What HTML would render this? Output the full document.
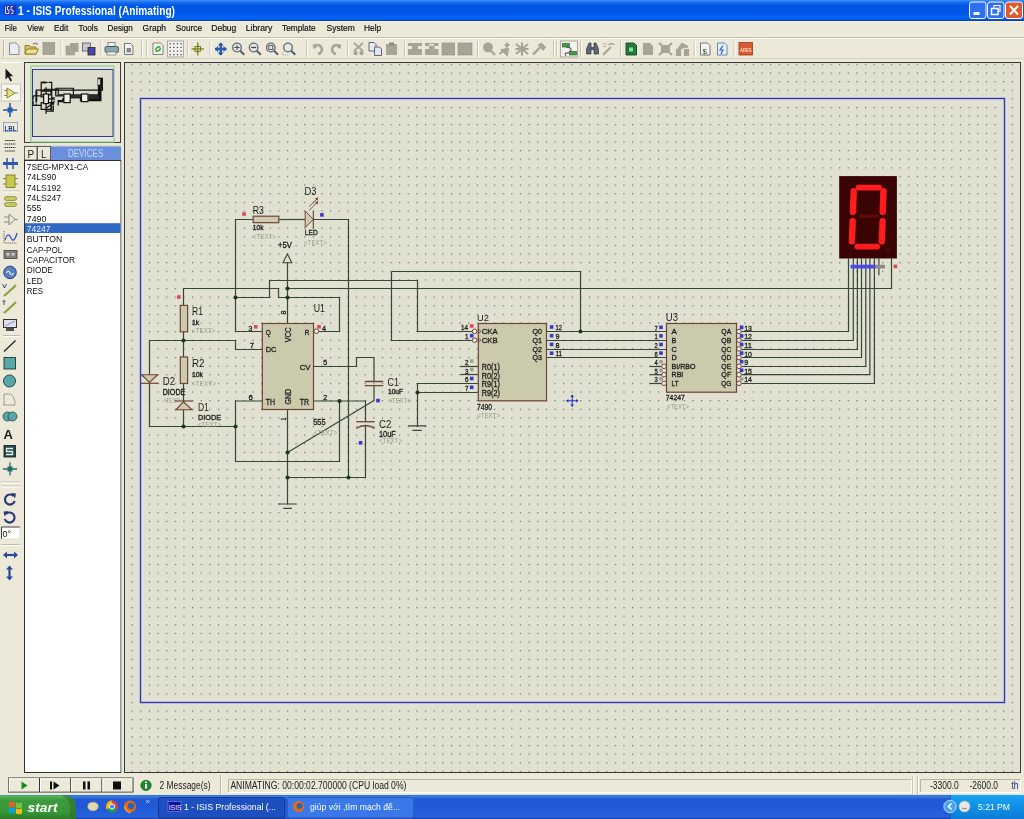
<!DOCTYPE html>
<html><head><meta charset="utf-8">
<style>
html,body{margin:0;padding:0;width:1024px;height:819px;overflow:hidden;background:#ece9d8;}
svg{position:absolute;left:0;top:0;display:block;will-change:transform;}
text{font-family:"Liberation Sans",sans-serif;}
</style></head>
<body>
<svg width="1024" height="819" viewBox="0 0 1024 819">
<defs>
<linearGradient id="tb" x1="0" y1="0" x2="0" y2="1">
<stop offset="0" stop-color="#3d95ff"/><stop offset="0.1" stop-color="#1f6ff2"/><stop offset="0.25" stop-color="#0058e6"/><stop offset="0.6" stop-color="#0055e5"/><stop offset="0.8" stop-color="#0064f6"/><stop offset="0.93" stop-color="#005ae8"/><stop offset="1" stop-color="#0040b0"/>
</linearGradient>
<linearGradient id="task" x1="0" y1="0" x2="0" y2="1">
<stop offset="0" stop-color="#3a80f3"/><stop offset="0.08" stop-color="#3d8adc"/><stop offset="0.2" stop-color="#2458d8"/><stop offset="0.5" stop-color="#2158d6"/><stop offset="0.9" stop-color="#2662dc"/><stop offset="1" stop-color="#1f4fc4"/>
</linearGradient>
<linearGradient id="start" x1="0" y1="0" x2="0" y2="1">
<stop offset="0" stop-color="#5bb85b"/><stop offset="0.2" stop-color="#3c9a3c"/><stop offset="0.7" stop-color="#379837"/><stop offset="1" stop-color="#2a7a2a"/>
</linearGradient>
<linearGradient id="tray" x1="0" y1="0" x2="0" y2="1">
<stop offset="0" stop-color="#1ba3f0"/><stop offset="0.5" stop-color="#0f8fe8"/><stop offset="1" stop-color="#0d7dd6"/>
</linearGradient>
<pattern id="grid" x="131.6" y="63.8" width="8.628" height="8.622" patternUnits="userSpaceOnUse">
<rect x="0" y="0" width="1.2" height="1.2" fill="#6a6a5e"/>
</pattern>
</defs>
<rect x="0" y="0" width="1024" height="21" fill="url(#tb)"/>
<rect x="0" y="20" width="1024" height="1" fill="#0a3fa8"/>
<rect x="0" y="21" width="1024" height="1" fill="#f7f5ee"/>
<rect x="4" y="5" width="12" height="10" fill="#2030b8"/>
<path d="M5.5 6.5 v7 h3 M9 6.5 h-1.5 v3.5 h1.5 v3.5 h-1.5 M13 6.5 h-2 v3.5 h2 v3.5 h-2" stroke="#dde" stroke-width="1" fill="none"/>
<text x="18" y="14.6" font-size="11.9" fill="#fff" font-weight="bold" textLength="157" lengthAdjust="spacingAndGlyphs">1 - ISIS Professional (Animating)</text>
<rect x="969.5" y="2" width="16.5" height="16.5" rx="2.5" fill="#2f6ff0" stroke="#fff" stroke-width="1"/><rect x="973.5" y="12" width="6" height="3" fill="#fff"/>
<rect x="987.5" y="2" width="16.5" height="16.5" rx="2.5" fill="#2f6ff0" stroke="#fff" stroke-width="1"/><rect x="991.5" y="8.5" width="6.5" height="6" fill="none" stroke="#fff" stroke-width="1.5"/><path d="M994.0 8 v-2.5 h6 v6 h-2" fill="none" stroke="#fff" stroke-width="1.2"/>
<rect x="1005.5" y="2" width="17" height="16.5" rx="2.5" fill="#e0582e" stroke="#fff" stroke-width="1"/><path d="M1010.0 6 L1018.0 14.5 M1018.0 6 L1010.0 14.5" stroke="#fff" stroke-width="2"/>
<rect x="0" y="22" width="1024" height="15" fill="#ece9d8"/>
<rect x="0" y="37" width="1024" height="1" fill="#c4c0ae"/>
<rect x="0" y="38" width="1024" height="1" fill="#fbfaf5"/>
<text x="4.8" y="31.3" font-size="9" fill="#101010" textLength="12.0" lengthAdjust="spacingAndGlyphs" stroke="#101010" stroke-width="0.18">File</text>
<text x="27.3" y="31.3" font-size="9" fill="#101010" textLength="16.5" lengthAdjust="spacingAndGlyphs" stroke="#101010" stroke-width="0.18">View</text>
<text x="54" y="31.3" font-size="9" fill="#101010" textLength="14.2" lengthAdjust="spacingAndGlyphs" stroke="#101010" stroke-width="0.18">Edit</text>
<text x="78.5" y="31.3" font-size="9" fill="#101010" textLength="19.3" lengthAdjust="spacingAndGlyphs" stroke="#101010" stroke-width="0.18">Tools</text>
<text x="107.6" y="31.3" font-size="9" fill="#101010" textLength="25.2" lengthAdjust="spacingAndGlyphs" stroke="#101010" stroke-width="0.18">Design</text>
<text x="142.6" y="31.3" font-size="9" fill="#101010" textLength="23.4" lengthAdjust="spacingAndGlyphs" stroke="#101010" stroke-width="0.18">Graph</text>
<text x="175.8" y="31.3" font-size="9" fill="#101010" textLength="26.2" lengthAdjust="spacingAndGlyphs" stroke="#101010" stroke-width="0.18">Source</text>
<text x="211.3" y="31.3" font-size="9" fill="#101010" textLength="25.0" lengthAdjust="spacingAndGlyphs" stroke="#101010" stroke-width="0.18">Debug</text>
<text x="245.7" y="31.3" font-size="9" fill="#101010" textLength="26.6" lengthAdjust="spacingAndGlyphs" stroke="#101010" stroke-width="0.18">Library</text>
<text x="282" y="31.3" font-size="9" fill="#101010" textLength="33.6" lengthAdjust="spacingAndGlyphs" stroke="#101010" stroke-width="0.18">Template</text>
<text x="326.6" y="31.3" font-size="9" fill="#101010" textLength="28.1" lengthAdjust="spacingAndGlyphs" stroke="#101010" stroke-width="0.18">System</text>
<text x="364" y="31.3" font-size="9" fill="#101010" textLength="17.2" lengthAdjust="spacingAndGlyphs" stroke="#101010" stroke-width="0.18">Help</text>
<rect x="0" y="39" width="1024" height="20" fill="#ece9d8"/>
<rect x="0" y="58" width="1024" height="1" fill="#d8d4c4"/>
<rect x="3" y="40.5" width="1" height="17" fill="#b8b4a0"/><rect x="4" y="40.5" width="1" height="17" fill="#fff"/>
<path d="M9.5 43 h6.5 l3 3 v8.5 h-9.5 z" fill="#ecebf6" stroke="#777" stroke-width="0.8"/>
<path d="M25 45.5 h4 l1 1.5 h6 v7 h-11 z" fill="#d8c660" stroke="#7a6a20" stroke-width="0.8"/><path d="M27 49 h11.5 l-2.5 5 h-11 z" fill="#f0e08a" stroke="#7a6a20" stroke-width="0.8"/><path d="M33 44 q2.5 -2 5 0.5" stroke="#556" stroke-width="0.9" fill="none"/>
<rect x="43" y="42.5" width="11.700000000000003" height="12.0" fill="#a7a596" stroke="#8e8c7e" stroke-width="0.6"/>
<rect x="60.5" y="41" width="1" height="16" fill="#c8c4b0"/><rect x="61.5" y="41" width="1" height="16" fill="#fff"/>
<rect x="70" y="43" width="8.5" height="9" fill="#a7a596"/><rect x="66" y="46" width="8.5" height="9" fill="#a7a596" stroke="#8e8c7e" stroke-width="0.5"/>
<rect x="82.5" y="43" width="8" height="8" fill="#c8c8d0" stroke="#555" stroke-width="0.8"/><rect x="88" y="47.5" width="7" height="7.5" fill="#4848b0" stroke="#223" stroke-width="0.8"/>
<rect x="100.5" y="41" width="1" height="16" fill="#c8c4b0"/><rect x="101.5" y="41" width="1" height="16" fill="#fff"/>
<rect x="108" y="42.5" width="7" height="4" fill="#eee" stroke="#666" stroke-width="0.7"/><rect x="105" y="46.5" width="13.5" height="6" rx="1.5" fill="#8aa8a8" stroke="#445" stroke-width="0.8"/><rect x="107" y="52" width="9" height="3" fill="#eee" stroke="#666" stroke-width="0.6"/>
<path d="M124.5 43.5 h6 l2.5 2.5 v8.5 h-8.5 z" fill="#f4f4f4" stroke="#555" stroke-width="0.8"/><rect x="126.5" y="48" width="4.5" height="4.5" fill="#888"/>
<rect x="141" y="41" width="1" height="16" fill="#c8c4b0"/><rect x="142" y="41" width="1" height="16" fill="#fff"/>
<rect x="146" y="41" width="1" height="16" fill="#c8c4b0"/><rect x="147" y="41" width="1" height="16" fill="#fff"/>
<path d="M153 43 h7.5 l2.5 2.5 v9 h-10 z" fill="#f6f6f0" stroke="#666" stroke-width="0.8"/><path d="M155.5 50 q1 -4 5 -3 M160.5 48 q-1 4 -5 3" stroke="#30a030" stroke-width="1.4" fill="none"/>
<rect x="167.5" y="41" width="16" height="16" fill="#f4f3ec" stroke="#9c9a8c" stroke-width="0.8"/>
<rect x="169.6" y="43.2" width="1.3" height="1.3" fill="#404060"/>
<rect x="169.6" y="46.800000000000004" width="1.3" height="1.3" fill="#404060"/>
<rect x="169.6" y="50.400000000000006" width="1.3" height="1.3" fill="#404060"/>
<rect x="169.6" y="54.0" width="1.3" height="1.3" fill="#404060"/>
<rect x="173.2" y="43.2" width="1.3" height="1.3" fill="#404060"/>
<rect x="173.2" y="46.800000000000004" width="1.3" height="1.3" fill="#404060"/>
<rect x="173.2" y="50.400000000000006" width="1.3" height="1.3" fill="#404060"/>
<rect x="173.2" y="54.0" width="1.3" height="1.3" fill="#404060"/>
<rect x="176.79999999999998" y="43.2" width="1.3" height="1.3" fill="#404060"/>
<rect x="176.79999999999998" y="46.800000000000004" width="1.3" height="1.3" fill="#404060"/>
<rect x="176.79999999999998" y="50.400000000000006" width="1.3" height="1.3" fill="#404060"/>
<rect x="176.79999999999998" y="54.0" width="1.3" height="1.3" fill="#404060"/>
<rect x="180.4" y="43.2" width="1.3" height="1.3" fill="#404060"/>
<rect x="180.4" y="46.800000000000004" width="1.3" height="1.3" fill="#404060"/>
<rect x="180.4" y="50.400000000000006" width="1.3" height="1.3" fill="#404060"/>
<rect x="180.4" y="54.0" width="1.3" height="1.3" fill="#404060"/>
<rect x="187" y="41" width="1" height="16" fill="#c8c4b0"/><rect x="188" y="41" width="1" height="16" fill="#fff"/>
<path d="M191.5 49 h12.5 M197.75 42.5 v13" stroke="#8c8c20" stroke-width="1.5"/><rect x="195" y="46.5" width="5.5" height="5" fill="none" stroke="#606010" stroke-width="0.8"/>
<rect x="209.5" y="41" width="1" height="16" fill="#c8c4b0"/><rect x="210.5" y="41" width="1" height="16" fill="#fff"/>
<path d="M215 49 h11.5 M220.75 43 v12" stroke="#2a5ab0" stroke-width="2.4"/><path d="M215 49 l3 -3 v6z M226.5 49 l-3 -3 v6z M220.75 42.5 l-3 3 h6z M220.75 55.5 l-3 -3 h6z" fill="#2a5ab0"/>
<circle cx="237" cy="47.5" r="4.3" fill="#e6e6e0" stroke="#5a6a70" stroke-width="1.3"/><path d="M240.2 50.7 l4 4" stroke="#506070" stroke-width="2"/>
<path d="M234.5 47.5 h5 M237 45 v5" stroke="#445" stroke-width="1"/>
<circle cx="253.6" cy="47.5" r="4.3" fill="#e6e6e0" stroke="#5a6a70" stroke-width="1.3"/><path d="M256.8 50.7 l4 4" stroke="#506070" stroke-width="2"/>
<path d="M251.1 47.5 h5" stroke="#445" stroke-width="1.2"/>
<circle cx="270.8" cy="47.5" r="4.3" fill="#e6e6e0" stroke="#5a6a70" stroke-width="1.3"/><path d="M274.0 50.7 l4 4" stroke="#506070" stroke-width="2"/>
<rect x="268.8" y="45.5" width="4" height="4" fill="none" stroke="#445" stroke-width="0.9"/>
<circle cx="288" cy="47.5" r="4.3" fill="#e6e6e0" stroke="#5a6a70" stroke-width="1.3"/><path d="M291.2 50.7 l4 4" stroke="#506070" stroke-width="2"/>
<path d="M283 55 h5 M283 55 v-3" stroke="#889" stroke-width="0.6" stroke-dasharray="1 1"/>
<rect x="306" y="41" width="1" height="16" fill="#c8c4b0"/><rect x="307" y="41" width="1" height="16" fill="#fff"/>
<path d="M314 46 q6 -3 8 3 q0 4 -4 5" stroke="#a7a596" stroke-width="2.6" fill="none"/><path d="M312.5 44 l1 5 l4 -2z" fill="#a7a596"/>
<path d="M340 46 q-6 -3 -8 3 q0 4 4 5" stroke="#a7a596" stroke-width="2.6" fill="none"/><path d="M341.5 44 l-1 5 l-4 -2z" fill="#a7a596"/>
<rect x="347" y="41" width="1" height="16" fill="#c8c4b0"/><rect x="348" y="41" width="1" height="16" fill="#fff"/>
<path d="M354 43 l9 8 M363 43 l-9 8" stroke="#a7a596" stroke-width="1.8"/><circle cx="355.5" cy="53" r="2.2" fill="#a7a596"/><circle cx="361.5" cy="53" r="2.2" fill="#a7a596"/>
<path d="M369 42.5 h5 l2 2 v6.5 h-7 z" fill="#e8e8f0" stroke="#445" stroke-width="0.8"/><path d="M374.5 47 h5 l2 2 v6.5 h-7 z" fill="#e0e4f4" stroke="#445" stroke-width="0.8"/>
<rect x="386" y="44" width="11" height="11" fill="#a7a596"/><rect x="389" y="42.5" width="5" height="3" fill="#8e8c7e"/>
<rect x="404" y="41" width="1" height="16" fill="#c8c4b0"/><rect x="405" y="41" width="1" height="16" fill="#fff"/>
<path d="M408 43 h14 v3 h-4 v3 h4 v6 h-14 v-6 h4 v-3 h-4z" fill="#a7a596"/>
<path d="M425 43 h13.5 v3 h-4 v3 h4 v6 h-13.5 v-6 h4 v-3 h-4z" fill="#a7a596"/><rect x="429" y="44" width="5" height="1.5" fill="#ece9d8"/>
<rect x="442" y="43" width="12.699999999999989" height="12" fill="#a7a596" stroke="#8e8c7e" stroke-width="0.6"/>
<rect x="458" y="43" width="14" height="12" fill="#a7a596" stroke="#8e8c7e" stroke-width="0.6"/>
<rect x="477" y="41" width="1" height="16" fill="#c8c4b0"/><rect x="478" y="41" width="1" height="16" fill="#fff"/>
<circle cx="488" cy="47.5" r="5" fill="#a7a596"/><path d="M491 51 l4 4" stroke="#a7a596" stroke-width="2.4"/>
<path d="M499.5 54 l7 -6 M502 50 l6 -1 l-1 6 z M507 42.5 v5 M504.5 45 h5" stroke="#a7a596" stroke-width="2" fill="#a7a596"/>
<path d="M516 44 l12 10 M528 44 l-12 10 M522 42.5 v13 M515.5 49 h13" stroke="#a7a596" stroke-width="2.2"/>
<path d="M533 54.5 l8 -8" stroke="#a7a596" stroke-width="2.4"/><path d="M537.5 45 l4 -2.5 l4.5 4.5 l-2.5 4z" fill="#a7a596"/>
<rect x="553" y="41" width="1" height="16" fill="#c8c4b0"/><rect x="554" y="41" width="1" height="16" fill="#fff"/>
<rect x="556" y="41" width="1" height="16" fill="#c8c4b0"/><rect x="557" y="41" width="1" height="16" fill="#fff"/>
<rect x="560.5" y="41" width="17" height="16" fill="#f4f3ec" stroke="#9c9a8c" stroke-width="0.8"/><path d="M566 47 q5 0 5 3 q0 3 -4 3 q-3 0 -1 3" stroke="#806080" stroke-width="1.3" fill="none"/><rect x="562.5" y="43.5" width="7" height="3.5" fill="#40a040" stroke="#205020" stroke-width="0.6"/><rect x="569.5" y="51.5" width="7" height="3.5" fill="#40a040" stroke="#205020" stroke-width="0.6"/>
<rect x="580" y="41" width="1" height="16" fill="#c8c4b0"/><rect x="581" y="41" width="1" height="16" fill="#fff"/>
<path d="M586.5 54 v-5 l2.5 -6 h2 v11z M598.5 54 v-5 l-2.5 -6 h-2 v11z" fill="#606878" stroke="#303440" stroke-width="0.7"/><rect x="591" y="47" width="3.5" height="3" fill="#505868"/>
<path d="M603 55 l8 -8" stroke="#a7a596" stroke-width="2.2"/><path d="M608.5 45 q3 -3 6 0" stroke="#a7a596" stroke-width="1.5" fill="none"/><path d="M603 44 h4 M603 46.5 h3" stroke="#a7a596" stroke-width="0.8"/>
<rect x="620" y="41" width="1" height="16" fill="#c8c4b0"/><rect x="621" y="41" width="1" height="16" fill="#fff"/>
<path d="M626 43 h8 l2.5 2.5 v9.5 h-10.5z" fill="#208040" stroke="#0a3018" stroke-width="0.8"/><rect x="628.5" y="47" width="5" height="5" fill="#80e090" stroke="#104020" stroke-width="0.6"/>
<path d="M643 43 h7 l3 3 v9 h-10z" fill="#a7a596"/>
<path d="M659 43 l13 12 M672 43 l-13 12" stroke="#a7a596" stroke-width="2.2"/><rect x="661" y="45" width="9" height="8" fill="#a7a596"/>
<path d="M677 55 v-5 h3 v5z M685 55 v-5 h3 v5z M678 50 l4 -6 l6 3" stroke="#a7a596" stroke-width="2.2" fill="#a7a596"/>
<rect x="693.75" y="41" width="1" height="16" fill="#c8c4b0"/><rect x="694.75" y="41" width="1" height="16" fill="#fff"/>
<path d="M700.5 43 h7 l2.5 2.5 v9.5 h-9.5z" fill="#f4f4f0" stroke="#555" stroke-width="0.8"/><text x="702.5" y="53.5" font-size="8" fill="#305030" font-family="Liberation Sans">$</text>
<path d="M717.5 43 h7 l2.5 2.5 v9.5 h-9.5z" fill="#e8f0fa" stroke="#4a6a9a" stroke-width="0.8"/><path d="M723 45.5 l-3 4.5 h3 l-2 4" stroke="#2060d0" stroke-width="1.2" fill="none"/>
<rect x="733.6" y="41" width="1" height="16" fill="#c8c4b0"/><rect x="734.6" y="41" width="1" height="16" fill="#fff"/>
<rect x="739" y="42.5" width="13.5" height="12.5" fill="#d85a30" stroke="#8a2a10" stroke-width="0.7"/><text x="740" y="51.5" font-size="6" fill="#ffd8c0" font-weight="bold" font-family="Liberation Sans" textLength="11.5" lengthAdjust="spacingAndGlyphs">ARES</text>
<rect x="0" y="59" width="24" height="716" fill="#ece9d8"/>
<rect x="2" y="62" width="19" height="1" fill="#fff"/>
<path d="M5.5 68.5 v11 l2.5 -2.5 l2.5 4.5 l1.6 -0.9 l-2.4 -4.3 h3.5z" fill="#1a1a1a"/>
<rect x="1.5" y="84" width="19" height="17" fill="#f6f5ee" stroke="#b0ae9e" stroke-width="0.6"/>
<path d="M7 88 v10 l8 -5z" fill="#e0e080" stroke="#707020" stroke-width="0.8"/><path d="M4 90.5 h3 M4 95.5 h3 M15 93 h3" stroke="#707020" stroke-width="0.8"/>
<path d="M3 110 h14 M10 103 v14" stroke="#2a5aa8" stroke-width="1.6"/><rect x="7.5" y="107.5" width="5" height="5" fill="#2a5aa8"/>
<rect x="3.5" y="122.5" width="14" height="9" fill="none" stroke="#2a5aa8" stroke-width="0.8" stroke-dasharray="1.2 0.8"/>
<text x="4.5" y="130.5" font-size="7" font-weight="bold" fill="#1a3a88" font-family="Liberation Sans" textLength="12" lengthAdjust="spacingAndGlyphs">LBL</text>
<path d="M5 140.5 h10 M4.5 144 h11 M4.5 147.5 h11 M5 151 h10" stroke="#303030" stroke-width="1.1" stroke-dasharray="1.5 0.6"/>
<path d="M3 163.5 h15" stroke="#2a5aa8" stroke-width="3"/><path d="M7 158 v11 M13 158 v11" stroke="#2a5aa8" stroke-width="1.5"/>
<rect x="6" y="175" width="9" height="12.5" fill="#c8c850" stroke="#707020" stroke-width="0.8"/><path d="M3 178.5 h3 M3 184 h3 M15 178.5 h3 M15 184 h3" stroke="#707020" stroke-width="0.8"/>
<rect x="3" y="190.5" width="17" height="1" fill="#c0bca8"/><rect x="3" y="191.5" width="17" height="1" fill="#fff"/>
<rect x="4.5" y="196.5" width="12" height="4" rx="2" fill="#c8c860" stroke="#707020" stroke-width="0.6"/><rect x="4.5" y="202.5" width="12" height="4" rx="2" fill="#c8c860" stroke="#707020" stroke-width="0.6"/>
<path d="M9 214 v11 l6 -5.5z" fill="none" stroke="#707070" stroke-width="0.8"/><path d="M4 217 h5 M4 222 h5 M15 219.5 h3" stroke="#707070" stroke-width="0.8"/>
<path d="M4 231 v12 h13" stroke="#804040" stroke-width="0.9" fill="none" stroke-dasharray="1 0.8"/><path d="M5 240 q3 -9 6 -2 q3 6 6 -5" stroke="#3050c0" stroke-width="1.2" fill="none"/>
<rect x="4" y="250.5" width="13" height="8" fill="#808080" stroke="#404040" stroke-width="0.8"/><rect x="6.5" y="253" width="3" height="2.5" fill="#d0d0d0"/><rect x="11.5" y="253" width="3" height="2.5" fill="#d0d0d0"/>
<circle cx="10" cy="272.4" r="6.3" fill="#5a80c0" stroke="#203a80" stroke-width="0.9"/><path d="M6.5 273 q1.8 -4 3.5 0 q1.8 4 3.5 0" stroke="#e8f0ff" stroke-width="1.1" fill="none"/>
<path d="M4 296 l9 -8 l3 -3" stroke="#90a040" stroke-width="2.2"/><path d="M2.5 284 l2 4 l2 -4" stroke="#303070" stroke-width="0.9" fill="none"/>
<path d="M4 313 l9 -8 l3 -3" stroke="#90a040" stroke-width="2.2"/><path d="M2.5 301 h3 M4 301 v4" stroke="#303070" stroke-width="0.9" fill="none"/>
<rect x="3.5" y="319.5" width="13" height="8" fill="#e0e0f0" stroke="#303030" stroke-width="1"/><path d="M5 326 l10 -5" stroke="#406080" stroke-width="0.6"/><rect x="6" y="327.5" width="8" height="3.5" fill="#505050"/>
<rect x="3" y="335" width="17" height="1" fill="#c0bca8"/><rect x="3" y="336" width="17" height="1" fill="#fff"/>
<path d="M4 351.5 L15.6 340.5" stroke="#202020" stroke-width="1.2"/>
<rect x="4" y="357.5" width="11.5" height="11.5" fill="#5aa6a6" stroke="#1a3a3a" stroke-width="0.9"/>
<circle cx="9.5" cy="381" r="6" fill="#5aa6a6" stroke="#1a3a3a" stroke-width="0.9"/>
<path d="M4 405 v-11 h4 q7 0 7 11z" fill="none" stroke="#404040" stroke-width="0.8" stroke-dasharray="1 0.8"/>
<circle cx="7.5" cy="416.5" r="4.5" fill="#5aa6a6" stroke="#1a3a3a" stroke-width="0.7"/><circle cx="12.5" cy="416.5" r="4.5" fill="#5aa6a6" stroke="#1a3a3a" stroke-width="0.7"/>
<text x="3.5" y="439" font-size="13" font-weight="bold" fill="#202020" font-family="Liberation Serif">A</text>
<rect x="4" y="445.5" width="11.5" height="11.5" fill="#2a4848" stroke="#101818" stroke-width="0.8"/><path d="M13 448.5 h-6.5 v3 h6 v3 h-6.5" stroke="#e0f0f0" stroke-width="1.3" fill="none"/>
<path d="M3 469 h14 M10 462.5 v13" stroke="#2a6a6a" stroke-width="1.3"/><rect x="7.5" y="466.5" width="5" height="5" fill="#2a6a6a"/>
<rect x="1" y="481.5" width="19" height="1" fill="#c0bca8"/><rect x="1" y="482.5" width="19" height="1" fill="#fff"/>
<rect x="2" y="485.5" width="18" height="1" fill="#c0bca8"/><rect x="2" y="486.5" width="18" height="1" fill="#fff"/>
<path d="M13.5 496 a5 5 0 1 0 1.2 5" stroke="#2a3a78" stroke-width="2.2" fill="none"/><path d="M11 493 l5 0.5 l-1 5z" fill="#2a3a78"/>
<path d="M6 514 a5 5 0 1 1 -1.2 5" stroke="#2a3a78" stroke-width="2.2" fill="none" transform="translate(0,0)"/><path d="M8.5 511 l-5 0.5 l1 5z" fill="#2a3a78"/>
<rect x="1.5" y="527" width="18.5" height="12" fill="#fff"/><path d="M1.5 539 v-12 h18.5" stroke="#404040" stroke-width="1" fill="none"/><path d="M20 527 v12 h-18.5" stroke="#e0ded0" stroke-width="1" fill="none"/>
<text x="2.5" y="537" font-size="9" fill="#101010" font-family="Liberation Sans">0°</text>
<rect x="1" y="544" width="19" height="1" fill="#c0bca8"/><rect x="1" y="545" width="19" height="1" fill="#fff"/>
<path d="M4.5 555 h12" stroke="#2a4a98" stroke-width="2.2"/><path d="M3 555 l4 -3.5 v7z M18 555 l-4 -3.5 v7z" fill="#2a4a98"/>
<path d="M9.5 567 v12" stroke="#2a4a98" stroke-width="2.2"/><path d="M9.5 565.5 l-3.5 4 h7z M9.5 580.5 l-3.5 -4 h7z" fill="#2a4a98"/>
<rect x="24.5" y="62.5" width="96" height="80" fill="#e8e6da" stroke="#3a3a3a" stroke-width="1"/>
<rect x="31" y="66" width="83" height="76" fill="none" stroke="#8ad08a" stroke-width="1.2"/>
<rect x="32.5" y="69.5" width="80.5" height="67" fill="#dcdccc" stroke="#3838a0" stroke-width="1"/>
<polyline points="41.17,91.13 41.17,82.46 42.83,82.46" fill="none" stroke="#101010" stroke-width="1.2"/>
<polyline points="45.22,82.46 47.67,82.46" fill="none" stroke="#101010" stroke-width="1.2"/>
<polyline points="48.47,82.46 51.73,82.46 51.73,111.14" fill="none" stroke="#101010" stroke-width="1.2"/>
<polyline points="36.32,92.01 36.32,90.13 45.19,90.13 45.19,91.13 46.03,91.13" fill="none" stroke="#101010" stroke-width="1.2"/>
<polyline points="41.17,91.13 44.35,91.13 44.35,89.24 58.18,89.24 58.18,94.91 63.36,94.91" fill="none" stroke="#101010" stroke-width="1.2"/>
<polyline points="46.03,90.13 102.45,90.13 102.45,86.79" fill="none" stroke="#101010" stroke-width="1.2"/>
<polyline points="46.03,91.13 50.89,91.13 50.89,94.91 48.93,94.91" fill="none" stroke="#101010" stroke-width="1.2"/>
<polyline points="46.03,87.26 46.03,93.99" fill="none" stroke="#101010" stroke-width="1.2"/>
<polyline points="41.17,91.13 41.17,94.91 43.64,94.91" fill="none" stroke="#101010" stroke-width="1.2"/>
<polyline points="36.32,94.94 36.32,97.75" fill="none" stroke="#101010" stroke-width="1.2"/>
<polyline points="33.14,95.91 41.17,95.91 41.17,96.91 43.64,96.91" fill="none" stroke="#101010" stroke-width="1.2"/>
<polyline points="33.14,95.91 33.14,99.71" fill="none" stroke="#101010" stroke-width="1.2"/>
<polyline points="33.14,100.69 33.14,105.47 41.17,105.47" fill="none" stroke="#101010" stroke-width="1.2"/>
<polyline points="36.32,100.69 36.32,102.73" fill="none" stroke="#101010" stroke-width="1.2"/>
<polyline points="36.32,103.62 36.32,105.47" fill="none" stroke="#101010" stroke-width="1.2"/>
<polyline points="43.64,102.64 41.17,102.64 41.17,109.37 50.89,109.37 50.89,102.64" fill="none" stroke="#101010" stroke-width="1.2"/>
<polyline points="48.44,102.64 53.32,102.64 53.32,104.94" fill="none" stroke="#101010" stroke-width="1.2"/>
<polyline points="53.32,105.48 53.32,111.14 46.03,111.14" fill="none" stroke="#101010" stroke-width="1.2"/>
<polyline points="46.03,103.58 46.03,114.09" fill="none" stroke="#101010" stroke-width="1.2"/>
<polyline points="46.03,108.36 54.11,102.58" fill="none" stroke="#101010" stroke-width="1.2"/>
<polyline points="48.44,98.80 52.48,98.80 52.48,97.80 54.11,97.80 54.11,100.47" fill="none" stroke="#101010" stroke-width="1.2"/>
<polyline points="54.11,100.93 54.11,102.58" fill="none" stroke="#101010" stroke-width="1.2"/>
<polyline points="55.75,88.24 55.75,95.91 63.36,95.91" fill="none" stroke="#101010" stroke-width="1.2"/>
<polyline points="55.75,88.24 73.40,88.24 73.40,94.91" fill="none" stroke="#101010" stroke-width="1.2"/>
<polyline points="70.21,94.91 81.43,94.91" fill="none" stroke="#101010" stroke-width="1.2"/>
<polyline points="70.21,95.91 81.43,95.91" fill="none" stroke="#101010" stroke-width="1.2"/>
<polyline points="70.21,96.91 81.43,96.91" fill="none" stroke="#101010" stroke-width="1.2"/>
<polyline points="70.21,97.80 81.43,97.80" fill="none" stroke="#101010" stroke-width="1.2"/>
<polyline points="63.81,100.69 58.18,100.69 58.18,105.47" fill="none" stroke="#101010" stroke-width="1.2"/>
<polyline points="58.18,101.69 63.81,101.69" fill="none" stroke="#101010" stroke-width="1.2"/>
<polyline points="62.17,98.80 63.81,98.80" fill="none" stroke="#101010" stroke-width="1.2"/>
<polyline points="62.17,99.69 63.81,99.69" fill="none" stroke="#101010" stroke-width="1.2"/>
<polyline points="88.44,94.91 98.44,94.91 98.44,86.79" fill="none" stroke="#101010" stroke-width="1.2"/>
<polyline points="88.44,95.91 98.89,95.91 98.89,86.79" fill="none" stroke="#101010" stroke-width="1.2"/>
<polyline points="88.44,96.91 99.27,96.91 99.27,86.79" fill="none" stroke="#101010" stroke-width="1.2"/>
<polyline points="88.44,97.80 99.65,97.80 99.65,86.79" fill="none" stroke="#101010" stroke-width="1.2"/>
<polyline points="88.44,98.80 100.05,98.80 100.05,86.79" fill="none" stroke="#101010" stroke-width="1.2"/>
<polyline points="88.44,99.71 100.44,99.71 100.44,86.79" fill="none" stroke="#101010" stroke-width="1.2"/>
<polyline points="88.44,100.69 100.86,100.69 100.86,86.79" fill="none" stroke="#101010" stroke-width="1.2"/>
<polyline points="79.87,98.80 81.02,98.80" fill="none" stroke="#101010" stroke-width="1.2"/>
<polyline points="79.87,99.71 81.02,99.71" fill="none" stroke="#101010" stroke-width="1.2"/>
<polyline points="79.87,100.69 81.02,100.69" fill="none" stroke="#101010" stroke-width="1.2"/>
<polyline points="101.28,86.79 101.28,88.66" fill="none" stroke="#101010" stroke-width="1.2"/>
<rect x="42.83" y="82.09" width="2.39" height="0.72" fill="#f0f0e8" stroke="#101010" stroke-width="1.2"/>
<rect x="36.02" y="92.01" width="0.68" height="2.94" fill="#f0f0e8" stroke="#101010" stroke-width="1.2"/>
<rect x="36.02" y="97.75" width="0.68" height="2.95" fill="#f0f0e8" stroke="#101010" stroke-width="1.2"/>
<rect x="43.68" y="94.02" width="4.78" height="9.56" fill="#f0f0e8" stroke="#101010" stroke-width="1.2"/>
<rect x="63.86" y="94.02" width="6.37" height="8.60" fill="#f0f0e8" stroke="#101010" stroke-width="1.2"/>
<rect x="81.44" y="94.02" width="6.54" height="7.64" fill="#f0f0e8" stroke="#101010" stroke-width="1.2"/>
<rect x="97.57" y="77.63" width="5.39" height="9.16" fill="#101010"/>
<rect x="97.92" y="79.17" width="2.34" height="5.56" fill="#d0d0c0"/>
<rect x="24" y="145.5" width="97.5" height="15" fill="#d4d0c0"/>
<rect x="24.5" y="146.5" width="12.5" height="13.5" fill="#ece9d8" stroke="#404040" stroke-width="0.8"/>
<rect x="37.5" y="146.5" width="13" height="13.5" fill="#ece9d8" stroke="#404040" stroke-width="0.8"/>
<text x="27.5" y="157.5" font-size="10" fill="#202020">P</text>
<text x="41" y="157.5" font-size="10" fill="#202020">L</text>
<rect x="51" y="146.5" width="70" height="13.5" fill="#6a8fdd"/>
<text x="67.9" y="157.1" font-size="10.4" fill="#c8d8f8" textLength="35.5" lengthAdjust="spacingAndGlyphs">DEVICES</text>
<rect x="24.5" y="160.5" width="96.5" height="612" fill="#fff" stroke="#303030" stroke-width="1"/>
<rect x="25" y="223.2" width="95.5" height="9.8" fill="#316ac5"/>
<text x="26.8" y="170.1" font-size="9.6" fill="#101010" textLength="61.4" lengthAdjust="spacingAndGlyphs">7SEG-MPX1-CA</text>
<text x="26.8" y="180.43" font-size="9.6" fill="#101010" textLength="29.6" lengthAdjust="spacingAndGlyphs">74LS90</text>
<text x="26.8" y="190.76" font-size="9.6" fill="#101010" textLength="34.3" lengthAdjust="spacingAndGlyphs">74LS192</text>
<text x="26.8" y="201.09" font-size="9.6" fill="#101010" textLength="34.3" lengthAdjust="spacingAndGlyphs">74LS247</text>
<text x="26.8" y="211.42" font-size="9.6" fill="#101010" textLength="14.5" lengthAdjust="spacingAndGlyphs">555</text>
<text x="26.8" y="221.75" font-size="9.6" fill="#101010" textLength="19.5" lengthAdjust="spacingAndGlyphs">7490</text>
<text x="26.8" y="232.07999999999998" font-size="9.6" fill="#e8f0ff" textLength="23.7" lengthAdjust="spacingAndGlyphs">74247</text>
<text x="26.8" y="242.41" font-size="9.6" fill="#101010" textLength="35.4" lengthAdjust="spacingAndGlyphs">BUTTON</text>
<text x="26.8" y="252.74" font-size="9.6" fill="#101010" textLength="35.4" lengthAdjust="spacingAndGlyphs">CAP-POL</text>
<text x="26.8" y="263.07" font-size="9.6" fill="#101010" textLength="48.2" lengthAdjust="spacingAndGlyphs">CAPACITOR</text>
<text x="26.8" y="273.4" font-size="9.6" fill="#101010" textLength="26" lengthAdjust="spacingAndGlyphs">DIODE</text>
<text x="26.8" y="283.73" font-size="9.6" fill="#101010" textLength="16" lengthAdjust="spacingAndGlyphs">LED</text>
<text x="26.8" y="294.06" font-size="9.6" fill="#101010" textLength="16.3" lengthAdjust="spacingAndGlyphs">RES</text>
<rect x="121.5" y="59" width="2.5" height="716" fill="#ece9d8"/>
<rect x="124.5" y="62.5" width="896" height="710" fill="#e1e1d1" stroke="#383838" stroke-width="1"/>
<rect x="125" y="63" width="895" height="709" fill="url(#grid)"/>
<rect x="140.5" y="98.5" width="864" height="604" fill="none" stroke="#c8c8ec" stroke-width="3"/>
<rect x="140.5" y="98.5" width="864" height="604" fill="none" stroke="#3a3a98" stroke-width="1.2"/>
<polyline points="235.5,297.5 235.5,219.5 253.2,219.5" fill="none" stroke="#364834" stroke-width="1.2" stroke-linejoin="miter"/>
<polyline points="278.8,219.5 305,219.5" fill="none" stroke="#364834" stroke-width="1.2" stroke-linejoin="miter"/>
<polyline points="313.6,219.5 348.5,219.5 348.5,477.5" fill="none" stroke="#364834" stroke-width="1.2" stroke-linejoin="miter"/>
<polyline points="183.5,305.4 183.5,288.5 278.5,288.5 278.5,297.5 287.5,297.5" fill="none" stroke="#364834" stroke-width="1.2" stroke-linejoin="miter"/>
<polyline points="235.5,297.5 269.5,297.5 269.5,280.5 417.5,280.5 417.5,331.5 473,331.5" fill="none" stroke="#364834" stroke-width="1.2" stroke-linejoin="miter"/>
<polyline points="287.5,288.5 891.5,288.5 891.5,258.5" fill="none" stroke="#364834" stroke-width="1.2" stroke-linejoin="miter"/>
<polyline points="287.5,297.5 339.5,297.5 339.5,331.5 318.5,331.5" fill="none" stroke="#364834" stroke-width="1.2" stroke-linejoin="miter"/>
<polyline points="287.5,262.7 287.5,323.2" fill="none" stroke="#364834" stroke-width="1.2" stroke-linejoin="miter"/>
<polyline points="235.5,297.5 235.5,331.5 261.9,331.5" fill="none" stroke="#364834" stroke-width="1.2" stroke-linejoin="miter"/>
<polyline points="183.5,331.8 183.5,357" fill="none" stroke="#364834" stroke-width="1.2" stroke-linejoin="miter"/>
<polyline points="149.5,340.5 235.5,340.5 235.5,349.5 261.9,349.5" fill="none" stroke="#364834" stroke-width="1.2" stroke-linejoin="miter"/>
<polyline points="149.5,340.5 149.5,374.7" fill="none" stroke="#364834" stroke-width="1.2" stroke-linejoin="miter"/>
<polyline points="149.5,383.5 149.5,426.5 235.5,426.5" fill="none" stroke="#364834" stroke-width="1.2" stroke-linejoin="miter"/>
<polyline points="183.5,383.5 183.5,401.8" fill="none" stroke="#364834" stroke-width="1.2" stroke-linejoin="miter"/>
<polyline points="183.5,409.8 183.5,426.5" fill="none" stroke="#364834" stroke-width="1.2" stroke-linejoin="miter"/>
<polyline points="261.9,401 235.5,401 235.5,461.5 339.5,461.5 339.5,401" fill="none" stroke="#364834" stroke-width="1.2" stroke-linejoin="miter"/>
<polyline points="313.3,401 365.5,401 365.5,421.7" fill="none" stroke="#364834" stroke-width="1.2" stroke-linejoin="miter"/>
<polyline points="365.5,426.6 365.5,477.5 287.5,477.5" fill="none" stroke="#364834" stroke-width="1.2" stroke-linejoin="miter"/>
<polyline points="287.5,409.5 287.5,504" fill="none" stroke="#364834" stroke-width="1.2" stroke-linejoin="miter"/>
<polyline points="287.5,452.5 374,400.5" fill="none" stroke="#364834" stroke-width="1.2" stroke-linejoin="miter"/>
<polyline points="313.3,366.5 356.5,366.5 356.5,357.5 374,357.5 374,381.5" fill="none" stroke="#364834" stroke-width="1.2" stroke-linejoin="miter"/>
<polyline points="374,385.6 374,400.5" fill="none" stroke="#364834" stroke-width="1.2" stroke-linejoin="miter"/>
<polyline points="391.5,271.5 391.5,340.5 473,340.5" fill="none" stroke="#364834" stroke-width="1.2" stroke-linejoin="miter"/>
<polyline points="391.5,271.5 580.5,271.5 580.5,331.5" fill="none" stroke="#364834" stroke-width="1.2" stroke-linejoin="miter"/>
<polyline points="546.3,331.5 666.4,331.5" fill="none" stroke="#364834" stroke-width="1.2" stroke-linejoin="miter"/>
<polyline points="546.3,340.5 666.4,340.5" fill="none" stroke="#364834" stroke-width="1.2" stroke-linejoin="miter"/>
<polyline points="546.3,349.5 666.4,349.5" fill="none" stroke="#364834" stroke-width="1.2" stroke-linejoin="miter"/>
<polyline points="546.3,357.5 666.4,357.5" fill="none" stroke="#364834" stroke-width="1.2" stroke-linejoin="miter"/>
<polyline points="477.8,383.5 417.5,383.5 417.5,426.5" fill="none" stroke="#364834" stroke-width="1.2" stroke-linejoin="miter"/>
<polyline points="417.5,392.5 477.8,392.5" fill="none" stroke="#364834" stroke-width="1.2" stroke-linejoin="miter"/>
<polyline points="460.3,366.5 477.8,366.5" fill="none" stroke="#364834" stroke-width="1.2" stroke-linejoin="miter"/>
<polyline points="460.3,374.5 477.8,374.5" fill="none" stroke="#364834" stroke-width="1.2" stroke-linejoin="miter"/>
<polyline points="741.5,331.5 848.5,331.5 848.5,258.5" fill="none" stroke="#364834" stroke-width="1.2" stroke-linejoin="miter"/>
<polyline points="741.5,340.5 853.3,340.5 853.3,258.5" fill="none" stroke="#364834" stroke-width="1.2" stroke-linejoin="miter"/>
<polyline points="741.5,349.5 857.4,349.5 857.4,258.5" fill="none" stroke="#364834" stroke-width="1.2" stroke-linejoin="miter"/>
<polyline points="741.5,357.5 861.5,357.5 861.5,258.5" fill="none" stroke="#364834" stroke-width="1.2" stroke-linejoin="miter"/>
<polyline points="741.5,366.5 865.8,366.5 865.8,258.5" fill="none" stroke="#364834" stroke-width="1.2" stroke-linejoin="miter"/>
<polyline points="741.5,374.7 869.9,374.7 869.9,258.5" fill="none" stroke="#364834" stroke-width="1.2" stroke-linejoin="miter"/>
<polyline points="741.5,383.5 874.4,383.5 874.4,258.5" fill="none" stroke="#364834" stroke-width="1.2" stroke-linejoin="miter"/>
<polyline points="649.7,366.5 662,366.5" fill="none" stroke="#364834" stroke-width="1.2" stroke-linejoin="miter"/>
<polyline points="649.7,374.7 662,374.7" fill="none" stroke="#364834" stroke-width="1.2" stroke-linejoin="miter"/>
<polyline points="649.7,383.5 662,383.5" fill="none" stroke="#364834" stroke-width="1.2" stroke-linejoin="miter"/>
<polyline points="878.9,258.5 878.9,275.3" fill="none" stroke="#364834" stroke-width="1.2" stroke-linejoin="miter"/>
<rect x="253.2" y="216.2" width="25.600000000000023" height="6.5" fill="#cccaac" stroke="#6e4438" stroke-width="1.2"/>
<rect x="180.3" y="305.4" width="7.299999999999983" height="26.400000000000034" fill="#cccaac" stroke="#6e4438" stroke-width="1.2"/>
<rect x="180.3" y="357" width="7.299999999999983" height="26.5" fill="#cccaac" stroke="#6e4438" stroke-width="1.2"/>
<rect x="262.3" y="323.5" width="51.19999999999999" height="86.0" fill="#cccaac" stroke="#6e4438" stroke-width="1.2"/>
<rect x="478.3" y="323.5" width="68.19999999999999" height="77.30000000000001" fill="#cccaac" stroke="#6e4438" stroke-width="1.2"/>
<rect x="666.5" y="323.5" width="70.0" height="68.69999999999999" fill="#cccaac" stroke="#6e4438" stroke-width="1.2"/>
<path d="M305.2 211 L305.2 227.6 L313.3 219.4 Z" fill="#d6c8b0" stroke="#6e4a40" stroke-width="1"/><path d="M313.3 211 V228.5" stroke="#5a4038" stroke-width="1.1"/>
<path d="M309.1 206.6 L317.6 198.3 M309.1 210.4 L317.6 202" stroke="#6e4438" stroke-width="0.9"/><path d="M318.4 197.4 l-3.4 0.8 l2.6 2.6z M318.4 201.2 l-3.4 0.8 l2.6 2.6z" fill="#6e4438"/>
<path d="M141.5 374.7 L157.6 374.7 L149.5 382.5 Z" fill="#cccaac" stroke="#6e4438" stroke-width="1.1"/><path d="M140 383.3 H158.5" stroke="#6e4438" stroke-width="1.2"/>
<path d="M175.9 409.8 L192 409.8 L183.5 401.8 Z" fill="#cccaac" stroke="#6e4438" stroke-width="1.1"/><path d="M175 401 H192.5" stroke="#6e4438" stroke-width="1.2"/>
<path d="M364.8 381.5 H383.3 M364.8 385.6 H383.3" stroke="#6e4438" stroke-width="1.3"/>
<path d="M356.2 421.7 H374.7" stroke="#6e4438" stroke-width="1.3"/><path d="M356.2 428.5 Q365.5 422.5 374.7 428.5" stroke="#6e4438" stroke-width="1.3" fill="none"/>
<path d="M283 262.7 H291.8 L287.4 254 Z" fill="none" stroke="#364834" stroke-width="1.1"/>
<path d="M278 504 H296.5 M283.3 508.4 H292" stroke="#364834" stroke-width="1.2"/>
<path d="M408.2 425.8 H426.2 M412.5 430.3 H421.7" stroke="#364834" stroke-width="1.2"/>
<circle cx="316.3" cy="331.2" r="2.3" fill="#f0eee0" stroke="#6e4438" stroke-width="1"/>
<circle cx="474.6" cy="331.3" r="2.3" fill="#f0eee0" stroke="#6e4438" stroke-width="1"/>
<circle cx="474.6" cy="340.2" r="2.3" fill="#f0eee0" stroke="#6e4438" stroke-width="1"/>
<circle cx="664" cy="366.3" r="2.3" fill="#f0eee0" stroke="#6e4438" stroke-width="1"/>
<circle cx="664" cy="374.7" r="2.3" fill="#f0eee0" stroke="#6e4438" stroke-width="1"/>
<circle cx="664" cy="383.3" r="2.3" fill="#f0eee0" stroke="#6e4438" stroke-width="1"/>
<circle cx="739" cy="331.5" r="2.3" fill="#f0eee0" stroke="#6e4438" stroke-width="1"/>
<circle cx="739" cy="340.2" r="2.3" fill="#f0eee0" stroke="#6e4438" stroke-width="1"/>
<circle cx="739" cy="348.9" r="2.3" fill="#f0eee0" stroke="#6e4438" stroke-width="1"/>
<circle cx="739" cy="357.5" r="2.3" fill="#f0eee0" stroke="#6e4438" stroke-width="1"/>
<circle cx="739" cy="366.3" r="2.3" fill="#f0eee0" stroke="#6e4438" stroke-width="1"/>
<circle cx="739" cy="374.7" r="2.3" fill="#f0eee0" stroke="#6e4438" stroke-width="1"/>
<circle cx="739" cy="383.3" r="2.3" fill="#f0eee0" stroke="#6e4438" stroke-width="1"/>
<path d="M477.8 328.8 L481 331.3 L477.8 333.8 M477.8 337.7 L481 340.2 L477.8 342.7" fill="none" stroke="#6e4438" stroke-width="0.9"/>
<circle cx="235.5" cy="297.5" r="2.1" fill="#1a3a1a"/>
<circle cx="287.5" cy="288.5" r="2.1" fill="#1a3a1a"/>
<circle cx="287.5" cy="297.5" r="2.1" fill="#1a3a1a"/>
<circle cx="183.5" cy="340.5" r="2.1" fill="#1a3a1a"/>
<circle cx="183.5" cy="426.5" r="2.1" fill="#1a3a1a"/>
<circle cx="235.5" cy="426.5" r="2.1" fill="#1a3a1a"/>
<circle cx="339.5" cy="401" r="2.1" fill="#1a3a1a"/>
<circle cx="287.5" cy="452.5" r="2.1" fill="#1a3a1a"/>
<circle cx="287.5" cy="477.5" r="2.1" fill="#1a3a1a"/>
<circle cx="348.5" cy="477.5" r="2.1" fill="#1a3a1a"/>
<circle cx="417.5" cy="392.5" r="2.1" fill="#1a3a1a"/>
<circle cx="580.5" cy="331.5" r="2.1" fill="#1a3a1a"/>
<rect x="839.2" y="176.1" width="57.7" height="82.4" fill="#3a0404"/>
<path d="M858.5 187.6 L879.2 187.6" stroke="#ff1c1c" stroke-width="5.6" stroke-linecap="round"/>
<path d="M853.7 191.3 L852.9 211.8" stroke="#ff1c1c" stroke-width="6.4" stroke-linecap="round"/>
<path d="M883.5 191.3 L882.7 211.8" stroke="#ff1c1c" stroke-width="6.4" stroke-linecap="round"/>
<path d="M852.7 221.3 L851.9 241.4" stroke="#ff1c1c" stroke-width="6.4" stroke-linecap="round"/>
<path d="M882.6 221.3 L881.8 241.4" stroke="#ff1c1c" stroke-width="6.4" stroke-linecap="round"/>
<path d="M857.2 246.6 L877.2 246.6" stroke="#ff1c1c" stroke-width="5.6" stroke-linecap="round"/>
<path d="M860 216.2 H877" stroke="#5c0a0a" stroke-width="3.6" stroke-linecap="round"/>
<circle cx="888" cy="249" r="1.6" fill="#5a0808"/>
<rect x="850.6" y="264.7" width="25.2" height="3.8" fill="#4a4ae8"/><rect x="875.8" y="264.7" width="9.2" height="3.8" fill="#8a8a88"/>
<rect x="242.2" y="212.2" width="3.6" height="3.6" fill="#e04858"/>
<rect x="320.09999999999997" y="213.1" width="3.6" height="3.6" fill="#3838d0"/>
<rect x="177.0" y="295.2" width="3.6" height="3.6" fill="#e04858"/>
<rect x="253.89999999999998" y="325.0" width="3.6" height="3.6" fill="#e04858"/>
<rect x="317.2" y="325.0" width="3.6" height="3.6" fill="#e04858"/>
<rect x="376.2" y="398.8" width="3.6" height="3.6" fill="#3838d0"/>
<rect x="358.8" y="441.0" width="3.6" height="3.6" fill="#3838d0"/>
<rect x="893.6" y="264.59999999999997" width="3.6" height="3.6" fill="#e04858"/>
<rect x="469.9" y="324.2" width="3.6" height="3.6" fill="#e04858"/>
<rect x="469.9" y="333.9" width="3.6" height="3.6" fill="#3838d0"/>
<rect x="469.9" y="359.2" width="3.6" height="3.6" fill="#a0a09a"/>
<rect x="469.9" y="367.7" width="3.6" height="3.6" fill="#a0a09a"/>
<rect x="469.9" y="376.7" width="3.6" height="3.6" fill="#3838d0"/>
<rect x="469.9" y="385.5" width="3.6" height="3.6" fill="#3838d0"/>
<rect x="549.8000000000001" y="325.2" width="3.6" height="3.6" fill="#3838d0"/>
<rect x="549.8000000000001" y="333.9" width="3.6" height="3.6" fill="#3838d0"/>
<rect x="549.8000000000001" y="342.59999999999997" width="3.6" height="3.6" fill="#3838d0"/>
<rect x="549.8000000000001" y="351.4" width="3.6" height="3.6" fill="#3838d0"/>
<rect x="659.2" y="325.5" width="3.6" height="3.6" fill="#3838d0"/>
<rect x="659.2" y="334.1" width="3.6" height="3.6" fill="#3838d0"/>
<rect x="659.2" y="342.7" width="3.6" height="3.6" fill="#3838d0"/>
<rect x="659.2" y="351.3" width="3.6" height="3.6" fill="#3838d0"/>
<rect x="659.2" y="359.9" width="3.6" height="3.6" fill="#a0a09a"/>
<rect x="659.2" y="368.5" width="3.6" height="3.6" fill="#a0a09a"/>
<rect x="659.2" y="377.09999999999997" width="3.6" height="3.6" fill="#a0a09a"/>
<rect x="739.8000000000001" y="325.5" width="3.6" height="3.6" fill="#3838d0"/>
<rect x="739.8000000000001" y="334.1" width="3.6" height="3.6" fill="#3838d0"/>
<rect x="739.8000000000001" y="342.7" width="3.6" height="3.6" fill="#3838d0"/>
<rect x="739.8000000000001" y="351.3" width="3.6" height="3.6" fill="#3838d0"/>
<rect x="739.8000000000001" y="359.9" width="3.6" height="3.6" fill="#3838d0"/>
<rect x="739.8000000000001" y="368.5" width="3.6" height="3.6" fill="#3838d0"/>
<rect x="739.8000000000001" y="377.09999999999997" width="3.6" height="3.6" fill="#a0a09a"/>
<text x="252.8" y="213.5" font-size="10.47" fill="#1c1c1c" textLength="11.2" lengthAdjust="spacingAndGlyphs">R3</text>
<text x="252.8" y="230.3" font-size="6.56" fill="#1c1c1c" stroke="#1c1c1c" stroke-width="0.3" textLength="10.7" lengthAdjust="spacingAndGlyphs">10k</text>
<text x="252.8" y="238.8" font-size="6.42" fill="#9a9a8a" textLength="23.2" lengthAdjust="spacingAndGlyphs">&lt;TEXT&gt;</text>
<text x="304.5" y="195" font-size="10.06" fill="#1c1c1c" textLength="11.9" lengthAdjust="spacingAndGlyphs">D3</text>
<text x="304.8" y="235.4" font-size="7.26" fill="#1c1c1c" stroke="#1c1c1c" stroke-width="0.3" textLength="13" lengthAdjust="spacingAndGlyphs">LED</text>
<text x="304" y="245" font-size="6.42" fill="#9a9a8a" textLength="23" lengthAdjust="spacingAndGlyphs">&lt;TEXT&gt;</text>
<text x="278" y="248.4" font-size="8.66" fill="#1c1c1c" stroke="#1c1c1c" stroke-width="0.3" textLength="13.8" lengthAdjust="spacingAndGlyphs">+5V</text>
<text x="192" y="315" font-size="10.34" fill="#1c1c1c" textLength="11" lengthAdjust="spacingAndGlyphs">R1</text>
<text x="192" y="324.5" font-size="6.42" fill="#1c1c1c" stroke="#1c1c1c" stroke-width="0.3" textLength="7.3" lengthAdjust="spacingAndGlyphs">1k</text>
<text x="192" y="333" font-size="6.42" fill="#9a9a8a" textLength="23.4" lengthAdjust="spacingAndGlyphs">&lt;TEXT&gt;</text>
<text x="192" y="367.4" font-size="10.34" fill="#1c1c1c" textLength="12.5" lengthAdjust="spacingAndGlyphs">R2</text>
<text x="192" y="377" font-size="6.42" fill="#1c1c1c" stroke="#1c1c1c" stroke-width="0.3" textLength="11" lengthAdjust="spacingAndGlyphs">10k</text>
<text x="192" y="385.7" font-size="6.42" fill="#9a9a8a" textLength="24" lengthAdjust="spacingAndGlyphs">&lt;TEXT&gt;</text>
<text x="162.7" y="385" font-size="11.31" fill="#1c1c1c" textLength="12.3" lengthAdjust="spacingAndGlyphs">D2</text>
<text x="162.7" y="394.5" font-size="8.24" fill="#1c1c1c" stroke="#1c1c1c" stroke-width="0.3" textLength="22.7" lengthAdjust="spacingAndGlyphs">DIODE</text>
<text x="162.7" y="403.2" font-size="6.42" fill="#9a9a8a" textLength="20" lengthAdjust="spacingAndGlyphs">&lt;TEXT&gt;</text>
<text x="197.9" y="410.6" font-size="11.31" fill="#1c1c1c" textLength="10.9" lengthAdjust="spacingAndGlyphs">D1</text>
<text x="197.9" y="420" font-size="8.1" fill="#1c1c1c" stroke="#1c1c1c" stroke-width="0.3" textLength="23.4" lengthAdjust="spacingAndGlyphs">DIODE</text>
<text x="197.9" y="427.4" font-size="6.42" fill="#9a9a8a" textLength="23.4" lengthAdjust="spacingAndGlyphs">&lt;TEXT&gt;</text>
<text x="313.8" y="311.6" font-size="10.61" fill="#1c1c1c" textLength="11.2" lengthAdjust="spacingAndGlyphs">U1</text>
<text x="265.7" y="334.8" font-size="8.1" fill="#1c1c1c" stroke="#1c1c1c" stroke-width="0.3" textLength="5" lengthAdjust="spacingAndGlyphs">Q</text>
<text x="265.7" y="352.2" font-size="8.1" fill="#1c1c1c" stroke="#1c1c1c" stroke-width="0.3" textLength="10.8" lengthAdjust="spacingAndGlyphs">DC</text>
<text x="265.7" y="404.5" font-size="8.66" fill="#1c1c1c" stroke="#1c1c1c" stroke-width="0.3" textLength="9.3" lengthAdjust="spacingAndGlyphs">TH</text>
<text x="304.7" y="334.5" font-size="8.1" fill="#1c1c1c" stroke="#1c1c1c" stroke-width="0.3" textLength="4.6" lengthAdjust="spacingAndGlyphs">R</text>
<text x="299.7" y="369.7" font-size="7.96" fill="#1c1c1c" stroke="#1c1c1c" stroke-width="0.3" textLength="10.8" lengthAdjust="spacingAndGlyphs">CV</text>
<text x="299.7" y="404.5" font-size="8.66" fill="#1c1c1c" stroke="#1c1c1c" stroke-width="0.3" textLength="9.3" lengthAdjust="spacingAndGlyphs">TR</text>
<text x="291.4" y="342.3" font-size="8.38" fill="#1c1c1c" stroke="#1c1c1c" stroke-width="0.3" textLength="15" lengthAdjust="spacingAndGlyphs" transform="rotate(-90 291.4 342.3)">VCC</text>
<text x="291.4" y="404.5" font-size="8.38" fill="#1c1c1c" stroke="#1c1c1c" stroke-width="0.3" textLength="15.7" lengthAdjust="spacingAndGlyphs" transform="rotate(-90 291.4 404.5)">GND</text>
<text x="248.6" y="330.7" font-size="7.68" fill="#1c1c1c" stroke="#1c1c1c" stroke-width="0.3" textLength="3.8" lengthAdjust="spacingAndGlyphs">3</text>
<text x="322" y="330.7" font-size="7.68" fill="#1c1c1c" stroke="#1c1c1c" stroke-width="0.3" textLength="4" lengthAdjust="spacingAndGlyphs">4</text>
<text x="250" y="348" font-size="7.68" fill="#1c1c1c" stroke="#1c1c1c" stroke-width="0.3" textLength="4" lengthAdjust="spacingAndGlyphs">7</text>
<text x="248.4" y="399.6" font-size="7.26" fill="#1c1c1c" stroke="#1c1c1c" stroke-width="0.3" textLength="4.4" lengthAdjust="spacingAndGlyphs">6</text>
<text x="323.3" y="365" font-size="7.68" fill="#1c1c1c" stroke="#1c1c1c" stroke-width="0.3" textLength="4" lengthAdjust="spacingAndGlyphs">5</text>
<text x="323.3" y="399.6" font-size="7.68" fill="#1c1c1c" stroke="#1c1c1c" stroke-width="0.3" textLength="4" lengthAdjust="spacingAndGlyphs">2</text>
<text x="286" y="314.5" font-size="6.98" fill="#1c1c1c" stroke="#1c1c1c" stroke-width="0.3" textLength="4" lengthAdjust="spacingAndGlyphs" transform="rotate(-90 286 314.5)">8</text>
<text x="285.5" y="420.5" font-size="6.98" fill="#1c1c1c" stroke="#1c1c1c" stroke-width="0.3" textLength="3" lengthAdjust="spacingAndGlyphs" transform="rotate(-90 285.5 420.5)">1</text>
<text x="313.2" y="425.2" font-size="8.24" fill="#1c1c1c" stroke="#1c1c1c" stroke-width="0.3" textLength="12.3" lengthAdjust="spacingAndGlyphs">555</text>
<text x="314" y="434.5" font-size="6.42" fill="#9a9a8a" textLength="23" lengthAdjust="spacingAndGlyphs">&lt;TEXT&gt;</text>
<text x="387.5" y="385.6" font-size="11.17" fill="#1c1c1c" textLength="11.5" lengthAdjust="spacingAndGlyphs">C1</text>
<text x="388" y="393.7" font-size="6.56" fill="#1c1c1c" stroke="#1c1c1c" stroke-width="0.3" textLength="15" lengthAdjust="spacingAndGlyphs">10uF</text>
<text x="388" y="403" font-size="6.42" fill="#9a9a8a" textLength="23" lengthAdjust="spacingAndGlyphs">&lt;TEXT&gt;</text>
<text x="379" y="428.4" font-size="11.03" fill="#1c1c1c" textLength="12.4" lengthAdjust="spacingAndGlyphs">C2</text>
<text x="379" y="437.2" font-size="8.66" fill="#1c1c1c" stroke="#1c1c1c" stroke-width="0.3" textLength="16.7" lengthAdjust="spacingAndGlyphs">10uF</text>
<text x="379" y="442.8" font-size="6.42" fill="#9a9a8a" textLength="23" lengthAdjust="spacingAndGlyphs">&lt;TEXT&gt;</text>
<text x="477" y="320.6" font-size="9.92" fill="#1c1c1c" textLength="11.9" lengthAdjust="spacingAndGlyphs">U2</text>
<text x="481.7" y="334" font-size="7.54" fill="#1c1c1c" stroke="#1c1c1c" stroke-width="0.3" textLength="15.9" lengthAdjust="spacingAndGlyphs">CKA</text>
<text x="481.7" y="343" font-size="7.54" fill="#1c1c1c" stroke="#1c1c1c" stroke-width="0.3" textLength="15.9" lengthAdjust="spacingAndGlyphs">CKB</text>
<text x="481.7" y="369.8" font-size="8.38" fill="#1c1c1c" stroke="#1c1c1c" stroke-width="0.3" textLength="18.3" lengthAdjust="spacingAndGlyphs">R0(1)</text>
<text x="481.7" y="378.6" font-size="8.38" fill="#1c1c1c" stroke="#1c1c1c" stroke-width="0.3" textLength="18.3" lengthAdjust="spacingAndGlyphs">R0(2)</text>
<text x="481.7" y="387.3" font-size="8.38" fill="#1c1c1c" stroke="#1c1c1c" stroke-width="0.3" textLength="18.3" lengthAdjust="spacingAndGlyphs">R9(1)</text>
<text x="481.7" y="396" font-size="8.38" fill="#1c1c1c" stroke="#1c1c1c" stroke-width="0.3" textLength="18.3" lengthAdjust="spacingAndGlyphs">R9(2)</text>
<text x="532.5" y="334" font-size="7.68" fill="#1c1c1c" stroke="#1c1c1c" stroke-width="0.3" textLength="9.5" lengthAdjust="spacingAndGlyphs">Q0</text>
<text x="532.5" y="343" font-size="7.68" fill="#1c1c1c" stroke="#1c1c1c" stroke-width="0.3" textLength="9.5" lengthAdjust="spacingAndGlyphs">Q1</text>
<text x="532.5" y="351.7" font-size="7.68" fill="#1c1c1c" stroke="#1c1c1c" stroke-width="0.3" textLength="9.5" lengthAdjust="spacingAndGlyphs">Q2</text>
<text x="532.5" y="360.3" font-size="7.68" fill="#1c1c1c" stroke="#1c1c1c" stroke-width="0.3" textLength="9.5" lengthAdjust="spacingAndGlyphs">Q3</text>
<text x="461" y="330" font-size="7.68" fill="#1c1c1c" stroke="#1c1c1c" stroke-width="0.3" textLength="7" lengthAdjust="spacingAndGlyphs">14</text>
<text x="465" y="339" font-size="7.4" fill="#1c1c1c" stroke="#1c1c1c" stroke-width="0.3" textLength="3.5" lengthAdjust="spacingAndGlyphs">1</text>
<text x="465" y="365" font-size="7.4" fill="#1c1c1c" stroke="#1c1c1c" stroke-width="0.3" textLength="3.5" lengthAdjust="spacingAndGlyphs">2</text>
<text x="465" y="373.5" font-size="7.4" fill="#1c1c1c" stroke="#1c1c1c" stroke-width="0.3" textLength="3.5" lengthAdjust="spacingAndGlyphs">3</text>
<text x="465" y="382" font-size="7.4" fill="#1c1c1c" stroke="#1c1c1c" stroke-width="0.3" textLength="3.5" lengthAdjust="spacingAndGlyphs">6</text>
<text x="465" y="390.5" font-size="7.4" fill="#1c1c1c" stroke="#1c1c1c" stroke-width="0.3" textLength="3.5" lengthAdjust="spacingAndGlyphs">7</text>
<text x="555.5" y="330" font-size="7.68" fill="#1c1c1c" stroke="#1c1c1c" stroke-width="0.3" textLength="6.5" lengthAdjust="spacingAndGlyphs">12</text>
<text x="555.5" y="339" font-size="7.68" fill="#1c1c1c" stroke="#1c1c1c" stroke-width="0.3" textLength="4" lengthAdjust="spacingAndGlyphs">9</text>
<text x="555.5" y="347.6" font-size="7.68" fill="#1c1c1c" stroke="#1c1c1c" stroke-width="0.3" textLength="4" lengthAdjust="spacingAndGlyphs">8</text>
<text x="555.5" y="356.3" font-size="7.68" fill="#1c1c1c" stroke="#1c1c1c" stroke-width="0.3" textLength="6.5" lengthAdjust="spacingAndGlyphs">11</text>
<text x="477" y="409.5" font-size="8.38" fill="#1c1c1c" stroke="#1c1c1c" stroke-width="0.3" textLength="15" lengthAdjust="spacingAndGlyphs">7490</text>
<text x="477" y="418" font-size="6.42" fill="#9a9a8a" textLength="23" lengthAdjust="spacingAndGlyphs">&lt;TEXT&gt;</text>
<text x="665.8" y="321" font-size="10.89" fill="#1c1c1c" textLength="12.2" lengthAdjust="spacingAndGlyphs">U3</text>
<text x="671.6" y="334.4" font-size="7.4" fill="#1c1c1c" stroke="#1c1c1c" stroke-width="0.3" textLength="5.3" lengthAdjust="spacingAndGlyphs">A</text>
<text x="671.6" y="343.0" font-size="7.4" fill="#1c1c1c" stroke="#1c1c1c" stroke-width="0.3" textLength="4.8" lengthAdjust="spacingAndGlyphs">B</text>
<text x="671.6" y="351.59999999999997" font-size="7.4" fill="#1c1c1c" stroke="#1c1c1c" stroke-width="0.3" textLength="5.3" lengthAdjust="spacingAndGlyphs">C</text>
<text x="671.6" y="360.2" font-size="7.4" fill="#1c1c1c" stroke="#1c1c1c" stroke-width="0.3" textLength="5.3" lengthAdjust="spacingAndGlyphs">D</text>
<text x="671.6" y="368.79999999999995" font-size="7.4" fill="#1c1c1c" stroke="#1c1c1c" stroke-width="0.3" textLength="23.9" lengthAdjust="spacingAndGlyphs">BI/RBO</text>
<text x="671.6" y="377.4" font-size="7.4" fill="#1c1c1c" stroke="#1c1c1c" stroke-width="0.3" textLength="11.7" lengthAdjust="spacingAndGlyphs">RBI</text>
<text x="671.6" y="386.0" font-size="7.4" fill="#1c1c1c" stroke="#1c1c1c" stroke-width="0.3" textLength="7" lengthAdjust="spacingAndGlyphs">LT</text>
<text x="731.3" y="334.4" font-size="7.4" fill="#1c1c1c" stroke="#1c1c1c" stroke-width="0.3" text-anchor="end" textLength="10" lengthAdjust="spacingAndGlyphs">QA</text>
<text x="731.3" y="343.0" font-size="7.4" fill="#1c1c1c" stroke="#1c1c1c" stroke-width="0.3" text-anchor="end" textLength="10" lengthAdjust="spacingAndGlyphs">QB</text>
<text x="731.3" y="351.59999999999997" font-size="7.4" fill="#1c1c1c" stroke="#1c1c1c" stroke-width="0.3" text-anchor="end" textLength="10" lengthAdjust="spacingAndGlyphs">QC</text>
<text x="731.3" y="360.2" font-size="7.4" fill="#1c1c1c" stroke="#1c1c1c" stroke-width="0.3" text-anchor="end" textLength="10" lengthAdjust="spacingAndGlyphs">QD</text>
<text x="731.3" y="368.79999999999995" font-size="7.4" fill="#1c1c1c" stroke="#1c1c1c" stroke-width="0.3" text-anchor="end" textLength="10" lengthAdjust="spacingAndGlyphs">QE</text>
<text x="731.3" y="377.4" font-size="7.4" fill="#1c1c1c" stroke="#1c1c1c" stroke-width="0.3" text-anchor="end" textLength="10" lengthAdjust="spacingAndGlyphs">QF</text>
<text x="731.3" y="386.0" font-size="7.4" fill="#1c1c1c" stroke="#1c1c1c" stroke-width="0.3" text-anchor="end" textLength="10" lengthAdjust="spacingAndGlyphs">QG</text>
<text x="654.4" y="330.7" font-size="7.4" fill="#1c1c1c" stroke="#1c1c1c" stroke-width="0.3" textLength="3.3" lengthAdjust="spacingAndGlyphs">7</text>
<text x="654.4" y="339.3" font-size="7.4" fill="#1c1c1c" stroke="#1c1c1c" stroke-width="0.3" textLength="3.3" lengthAdjust="spacingAndGlyphs">1</text>
<text x="654.4" y="347.9" font-size="7.4" fill="#1c1c1c" stroke="#1c1c1c" stroke-width="0.3" textLength="3.3" lengthAdjust="spacingAndGlyphs">2</text>
<text x="654.4" y="356.5" font-size="7.4" fill="#1c1c1c" stroke="#1c1c1c" stroke-width="0.3" textLength="3.3" lengthAdjust="spacingAndGlyphs">6</text>
<text x="654.4" y="365.09999999999997" font-size="7.4" fill="#1c1c1c" stroke="#1c1c1c" stroke-width="0.3" textLength="3.3" lengthAdjust="spacingAndGlyphs">4</text>
<text x="654.4" y="373.7" font-size="7.4" fill="#1c1c1c" stroke="#1c1c1c" stroke-width="0.3" textLength="3.3" lengthAdjust="spacingAndGlyphs">5</text>
<text x="654.4" y="382.29999999999995" font-size="7.4" fill="#1c1c1c" stroke="#1c1c1c" stroke-width="0.3" textLength="3.3" lengthAdjust="spacingAndGlyphs">3</text>
<text x="744.2" y="330.7" font-size="7.4" fill="#1c1c1c" stroke="#1c1c1c" stroke-width="0.3" textLength="7.8" lengthAdjust="spacingAndGlyphs">13</text>
<text x="744.2" y="339.3" font-size="7.4" fill="#1c1c1c" stroke="#1c1c1c" stroke-width="0.3" textLength="7.8" lengthAdjust="spacingAndGlyphs">12</text>
<text x="744.2" y="347.9" font-size="7.4" fill="#1c1c1c" stroke="#1c1c1c" stroke-width="0.3" textLength="7.8" lengthAdjust="spacingAndGlyphs">11</text>
<text x="744.2" y="356.5" font-size="7.4" fill="#1c1c1c" stroke="#1c1c1c" stroke-width="0.3" textLength="7.8" lengthAdjust="spacingAndGlyphs">10</text>
<text x="744.2" y="365.09999999999997" font-size="7.4" fill="#1c1c1c" stroke="#1c1c1c" stroke-width="0.3" textLength="4" lengthAdjust="spacingAndGlyphs">9</text>
<text x="744.2" y="373.7" font-size="7.4" fill="#1c1c1c" stroke="#1c1c1c" stroke-width="0.3" textLength="7.8" lengthAdjust="spacingAndGlyphs">15</text>
<text x="744.2" y="382.29999999999995" font-size="7.4" fill="#1c1c1c" stroke="#1c1c1c" stroke-width="0.3" textLength="7.8" lengthAdjust="spacingAndGlyphs">14</text>
<text x="665.8" y="400" font-size="7.68" fill="#1c1c1c" stroke="#1c1c1c" stroke-width="0.3" textLength="19" lengthAdjust="spacingAndGlyphs">74247</text>
<text x="667" y="409.4" font-size="6.42" fill="#9a9a8a" textLength="21.8" lengthAdjust="spacingAndGlyphs">&lt;TEXT&gt;</text>
<path d="M572.2 395 V406.5 M566.5 400.8 H578" stroke="#3030c0" stroke-width="1.1"/><path d="M572.2 394.5 l-1.8 2.5 h3.6z M572.2 407 l-1.8 -2.5 h3.6z M566 400.8 l2.5 -1.8 v3.6z M578.5 400.8 l-2.5 -1.8 v3.6z" fill="#3030c0"/>
<rect x="0" y="773" width="1024" height="22" fill="#ece9d8"/>
<rect x="8" y="777.5" width="125.5" height="15" fill="#303030"/>
<rect x="8.8" y="778.3" width="30.2" height="13.4" fill="#ece9d8"/>
<rect x="8.8" y="778.3" width="30.2" height="1" fill="#fff"/><rect x="8.8" y="778.3" width="1" height="13.4" fill="#fff"/>
<rect x="40.0" y="778.3" width="30.2" height="13.4" fill="#ece9d8"/>
<rect x="40.0" y="778.3" width="30.2" height="1" fill="#fff"/><rect x="40.0" y="778.3" width="1" height="13.4" fill="#fff"/>
<rect x="71.2" y="778.3" width="30.2" height="13.4" fill="#ece9d8"/>
<rect x="71.2" y="778.3" width="30.2" height="1" fill="#fff"/><rect x="71.2" y="778.3" width="1" height="13.4" fill="#fff"/>
<rect x="102.39999999999999" y="778.3" width="30.2" height="13.4" fill="#ece9d8"/>
<rect x="102.39999999999999" y="778.3" width="30.2" height="1" fill="#fff"/><rect x="102.39999999999999" y="778.3" width="1" height="13.4" fill="#fff"/>
<path d="M21.5 781.5 v8 l6 -4z" fill="#1a8a1a"/>
<rect x="50" y="781.5" width="2" height="8" fill="#101010"/><path d="M53.5 781.5 v8 l6 -4z" fill="#101010"/>
<rect x="83" y="781.5" width="2.5" height="8" fill="#101010"/><rect x="87.5" y="781.5" width="2.5" height="8" fill="#101010"/>
<rect x="113" y="781.5" width="8" height="8" fill="#101010"/>
<rect x="137" y="777" width="80" height="17" fill="#ece9d8"/>
<circle cx="146" cy="785.4" r="5.2" fill="#1a8a2a" stroke="#0a4a10" stroke-width="0.6"/><rect x="145" y="784" width="2" height="4.5" fill="#fff"/><rect x="145" y="781.5" width="2" height="1.6" fill="#fff"/>
<text x="159.5" y="789" font-size="10.3" fill="#202020" textLength="51" lengthAdjust="spacingAndGlyphs">2 Message(s)</text>
<rect x="220" y="775" width="1" height="19" fill="#b8b4a0"/><rect x="221" y="775" width="1" height="19" fill="#fff"/>
<path d="M228.5 792.5 v-13 h683" stroke="#b8b4a0" fill="none"/>
<path d="M911.5 779.5 v13 h-683" stroke="#fff" fill="none"/>
<text x="230.4" y="788.5" font-size="10" fill="#202020" textLength="176" lengthAdjust="spacingAndGlyphs">ANIMATING: 00:00:02.700000 (CPU load 0%)</text>
<rect x="912" y="776" width="1" height="19" fill="#c8c4b0"/><rect x="913" y="776" width="1" height="19" fill="#fff"/>
<rect x="917" y="776" width="1" height="19" fill="#c8c4b0"/><rect x="918" y="776" width="1" height="19" fill="#fff"/>
<path d="M920.5 792.5 v-13 h100" stroke="#b8b4a0" fill="none"/><path d="M1020.5 779.5 v13 h-100" stroke="#fff" fill="none"/>
<text x="930" y="789" font-size="10.3" fill="#202020" textLength="28.7" lengthAdjust="spacingAndGlyphs">-3300.0</text>
<text x="969.4" y="789" font-size="10.3" fill="#202020" textLength="28.6" lengthAdjust="spacingAndGlyphs">-2600.0</text>
<text x="1011.5" y="789" font-size="10.3" fill="#1a2a90" textLength="7" lengthAdjust="spacingAndGlyphs">th</text>
<rect x="0" y="794" width="1024" height="25" fill="url(#task)"/>
<rect x="0" y="794" width="1024" height="1" fill="#d4e8fc"/>
<rect x="0" y="795" width="1024" height="1" fill="#3a74b4"/>
<rect x="0" y="818" width="1024" height="1" fill="#1a48b0"/>
<path d="M0 795.3 h64 q12 1 12 12 v11.7 h-76z" fill="url(#start)"/><path d="M64 795.3 q12 1 12 12 v11.7 h-6 v-11 q0 -10 -9 -12.7z" fill="#2a6e2a" opacity="0.55"/>
<path d="M9 802.5 q3 -1.5 6 0 v5 q-3 -1.5 -6 0z" fill="#f05a28"/><path d="M16 802.5 q3 1.5 6 0 v5 q-3 1.5 -6 0z" fill="#7ac143"/><path d="M9 808.5 q3 -1.5 6 0 v5 q-3 -1.5 -6 0z" fill="#00a1f1"/><path d="M16 808.5 q3 1.5 6 0 v5 q-3 1.5 -6 0z" fill="#fbbc09"/>
<text x="27.5" y="811.8" font-size="13.5" font-weight="bold" font-style="italic" fill="#fff" font-family="Liberation Sans" textLength="30" lengthAdjust="spacingAndGlyphs">start</text>
<ellipse cx="93" cy="806.5" rx="5.5" ry="4.5" fill="#e0d8b0" stroke="#8a8060" stroke-width="0.6"/>
<circle cx="112" cy="806.5" r="6" fill="#db4437"/><path d="M112 806.5 L117.2 809.5 A6 6 0 0 1 106.8 809.5z" fill="#0f9d58"/><path d="M112 806.5 L106.8 809.5 A6 6 0 0 1 112 800.5z" fill="#f4b400" transform="rotate(0)"/><circle cx="112" cy="806.5" r="2.6" fill="#4285f4" stroke="#fff" stroke-width="1"/>
<circle cx="130" cy="806.5" r="6" fill="#e86a10"/><circle cx="131" cy="806" r="3.2" fill="#3060b0"/><path d="M124.5 806 q1 6 6 6.5" stroke="#f8a020" stroke-width="1.5" fill="none"/>
<text x="145.5" y="803.5" font-size="8" fill="#b8d0ff" font-family="Liberation Sans">»</text>
<rect x="158.5" y="797.5" width="126" height="20.5" rx="2" fill="#1e4fc0" stroke="#16389a" stroke-width="1"/>
<rect x="168" y="801.5" width="13" height="10" fill="#1010a0" stroke="#8888ff" stroke-width="0.6"/><text x="169" y="809.5" font-size="6.5" fill="#fff" font-family="Liberation Sans">ISIS</text>
<text x="184" y="810" font-size="9.5" fill="#fff" textLength="92" lengthAdjust="spacingAndGlyphs">1 - ISIS Professional (...</text>
<rect x="287.5" y="797.5" width="126" height="20.5" rx="2" fill="#3a78ea" stroke="#2a5cc8" stroke-width="1"/>
<circle cx="298.5" cy="806.5" r="5.5" fill="#e86a10"/><circle cx="299.5" cy="806" r="3" fill="#3060b0"/>
<text x="310" y="810" font-size="9.5" fill="#fff" textLength="90" lengthAdjust="spacingAndGlyphs">giúp với ,tìm mạch đế...</text>
<rect x="950" y="795" width="74" height="24" fill="url(#tray)"/>
<rect x="950" y="795" width="1" height="24" fill="#1a60c8"/>
<circle cx="950" cy="806.5" r="6.2" fill="#4aa0f8" stroke="#d0e8ff" stroke-width="0.8"/><path d="M951.5 803.5 l-3 3 l3 3" stroke="#fff" stroke-width="1.6" fill="none"/>
<circle cx="964.5" cy="806.5" r="5.5" fill="#e8e8e8" stroke="#b0b0b0" stroke-width="0.6"/><path d="M962 808 q2.5 2 5 0" stroke="#a04040" stroke-width="0.8" fill="none"/>
<text x="978" y="810" font-size="9.5" fill="#fff" textLength="32" lengthAdjust="spacingAndGlyphs">5:21 PM</text>
</svg>
</body></html>
